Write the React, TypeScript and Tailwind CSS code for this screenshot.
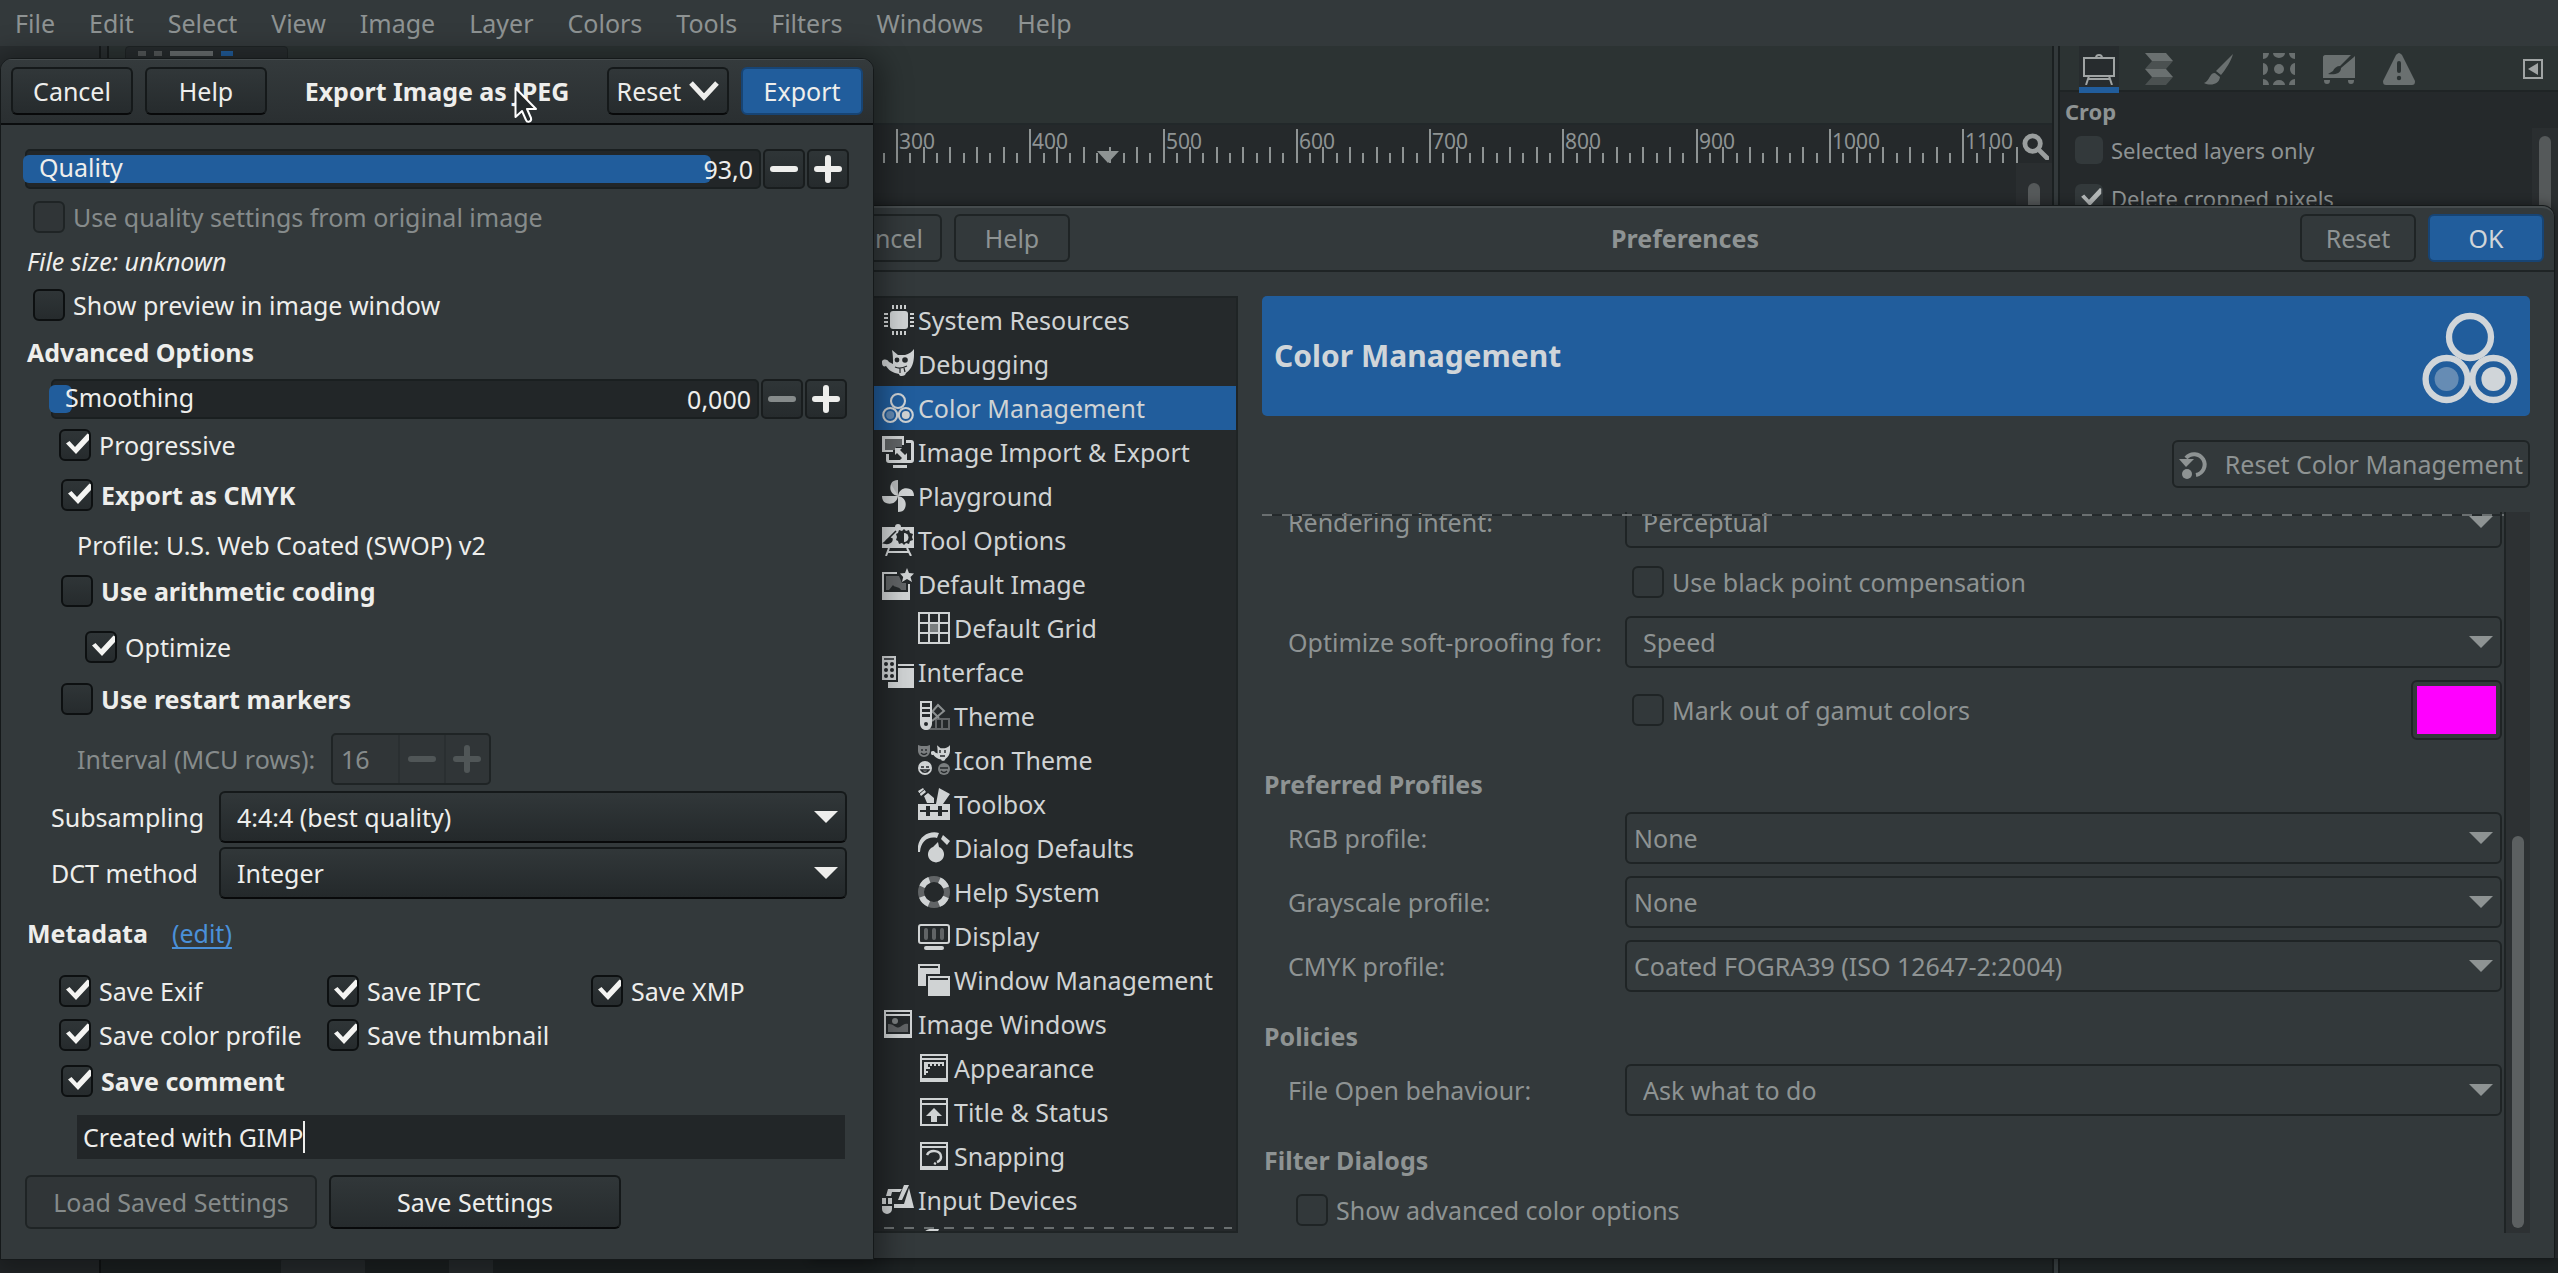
import { useState } from "react"
import type { ReactNode } from "react"
import clsx from "clsx"

const MENUS = ["File", "Edit", "Select", "View", "Image", "Layer", "Colors", "Tools", "Filters", "Windows", "Help"]

/* ---------- icons ---------- */

function Icon({ children, className = "size-8" }: { children: ReactNode; className?: string }) {
  return (
    <svg viewBox="0 0 32 32" fill="currentColor" className={clsx("shrink-0", className)} aria-hidden="true">
      {children}
    </svg>
  )
}

function CirclesIcon({ className }: { className?: string }) {
  return (
    <Icon className={className}>
      <g fill="none" stroke="currentColor" strokeWidth="2.1">
        <circle cx="16" cy="9" r="7" />
        <circle cx="8.2" cy="23" r="7" />
        <circle cx="23.8" cy="23" r="7" />
      </g>
      <circle cx="8.2" cy="23" r="4" opacity=".4" />
      <circle cx="23.8" cy="23" r="4" />
    </Icon>
  )
}

const WILBER = "M0 13c2-2 5-2 7 1l4 2c0-5 0-9-1-14l6 5h7c4-1 7-3 9-6 0 8 1 18-8 24l-1 2c-3 2-6 1-6-1l-4-1C8 23 6 21 4 18c-2 1-4 0-4-3Z"

const icons: Record<string, ReactNode> = {
  chip: (
    <Icon>
      <rect x="8" y="7" width="18" height="18" rx="3" />
      <path d="M10 1h2v4h-2zM14 1h2v4h-2zM18 1h2v4h-2zM22 1h2v4h-2zM10 27h2v4h-2zM14 27h2v4h-2zM18 27h2v4h-2zM22 27h2v4h-2zM2 9h4v2H2zM2 13h4v2H2zM2 17h4v2H2zM2 21h4v2H2zM28 9h4v2h-4zM28 13h4v2h-4zM28 17h4v2h-4zM28 21h4v2h-4z" />
    </Icon>
  ),
  wilber: (
    <Icon>
      <path d={WILBER} />
      <circle cx="15" cy="12" r="2.4" fill="#25292b" />
      <circle cx="23" cy="12" r="2.8" fill="#25292b" />
      <path d="M13 19c4 2 8 1 12-1M18 20v5M22 20l1 4" stroke="#25292b" strokeWidth="1.2" fill="none" />
    </Icon>
  ),
  circles: <CirclesIcon />,
  transfer: (
    <Icon>
      <path d="M0 0h22v9h-2V3H3v11h8v2H0z" />
      <path d="M3 3h17v8h-6v3H3z" opacity=".35" />
      <path d="M24 4h5a3 3 0 0 1 3 3v17a3 3 0 0 1-3 3H7a3 3 0 0 1-3-3v-6h3v6h22V7h-5zM11 29h14v3H11z" />
      <path d="M13 12h7l-2 2 5 5 2-2v7h-7l2-2-5-5-2 2z" />
    </Icon>
  ),
  pinwheel: (
    <Icon>
      <path d="M16 16C9 15 7 9 9 4c1-3 4-4 7-4zM16 16c1-7 7-9 12-7 3 1 4 4 4 7zM16 16c7 1 9 7 7 12-1 3-4 4-7 4zM16 16c-1 7-7 9-12 7-3-1-4-4-4-7z" />
      <path d="M16 16V0c-3 0-6 1-7 4M16 16h16M16 16v16M16 16H0" fill="#000" opacity=".12" />
    </Icon>
  ),
  easel: (
    <Icon>
      <path d="M13 3a3 3 0 0 1 6 0h13v21H0V3z" />
      <path d="m7 24-3 8M25 24l4 8M6 28h21" stroke="currentColor" strokeWidth="2" />
      <path d="m14 7-8 8M8 14c-3 0-3 3-6 5 4 1 8 0 8-4z" stroke="#25292b" strokeWidth="1.6" fill="#25292b" />
      <path d="m22 5 2 2 3-1 1 3 3 1-1 3 1 3-3 1-1 3-3-1-2 2-2-2-3 1-1-3-2-1 1-3-1-3 2-1 1-3 3 1z" fill="#25292b" />
      <path d="M22 9a4 4 0 0 1 0 9z" />
    </Icon>
  ),
  image: (
    <Icon>
      <path d="M0 4h15v2H2v18h24V16h2v16H0zM25 0l2 5 5 .5-3.500 3.500L30 14l-5-3-5 3 1.200-5L18 5.500l5-.5z" />
      <path d="M4 8h13l3 7h4v7h-5c-2-4-6-2-8-5l-4 5H4z" opacity=".35" />
    </Icon>
  ),
  grid: (
    <Icon>
      <path d="M11 11h10v10H11z" opacity=".5" />
      <path d="M1 1h30v30H1zM11 1v30M21 1v30M1 11h30M1 21h30" fill="none" stroke="currentColor" strokeWidth="2" />
    </Icon>
  ),
  interface: (
    <Icon>
      <path d="M0 0h14v24H0zM16 12h16v20H6v-6h10z" />
      <path d="M2 3h10M16 10h14" stroke="#25292b" strokeWidth="1.500" />
      <g fill="#25292b">
        <circle cx="4" cy="8" r="2" />
        <circle cx="10" cy="8" r="2" />
        <circle cx="4" cy="14" r="2" />
        <circle cx="10" cy="14" r="2" />
        <circle cx="4" cy="20" r="2" />
        <circle cx="10" cy="20" r="2" />
      </g>
      <path d="M16 8h16v2H16z" />
    </Icon>
  ),
  theme: (
    <Icon>
      <g fill="none" stroke="currentColor" strokeWidth="2">
        <path d="M8 29h23V19H18M18 19v10M24 19v10" opacity=".35" />
        <path d="m14 21 12-10-6-6-7 8M15 12l6 6" opacity=".6" />
        <path d="M3 2h10v22a5 5 0 0 1-10 0zM3 8h10M3 13h10M3 18h10" />
      </g>
      <path d="M3 19h10v6a5 5 0 0 1-10 0z" />
      <circle cx="8" cy="24" r="2" fill="#25292b" />
    </Icon>
  ),
  faces: (
    <Icon>
      <g opacity=".5">
        <path d="M0 1l3 1h6l3-1v6a6 6 0 0 1-12 0z" />
        <circle cx="26" cy="25" r="6" />
      </g>
      <circle cx="7" cy="24" r="7" />
      <g transform="translate(13 0) scale(.6)">
        <path d={WILBER} />
      </g>
      <g stroke="#25292b" strokeWidth="1.400" fill="none">
        <path d="M3 23h3M8 23h3M3 26c2 3 6 3 8 0zM22 24h8M23 27c2 2 4 2 6 0M4 5v2M8 5v2M3 9c2 2 4 2 6 0M22 6v3M27 6v3M22 12h5" />
      </g>
    </Icon>
  ),
  toolbox: (
    <Icon>
      <path d="M0 16h32v16H0zM0 3l5-3 3 4-5 4zM6 8l4-3 6 5v5H9zM21 0l11 6-7 10h-7z" />
      <path d="M2 23h28" stroke="#25292b" strokeWidth="2" />
      <path d="M8 18h4v10H8zM20 18h4v10h-4z" fill="#25292b" />
      <path d="M1 6l6-5M4 9l6-5" stroke="#25292b" strokeWidth="1" />
    </Icon>
  ),
  gauge: (
    <Icon>
      <path d="M0 20C-2 6 10-2 21 1l-2 5C10 4 3 9 2 20zM25 3l7 6-3 4-6-6zM20 10l1 5a8 8 0 1 1-6 0z" />
    </Icon>
  ),
  ring: (
    <Icon>
      <circle cx="16" cy="16" r="13" fill="none" stroke="currentColor" strokeWidth="6" opacity=".35" />
      <circle cx="16" cy="16" r="13" fill="none" stroke="currentColor" strokeWidth="6" strokeDasharray="10.210" strokeDashoffset="-5.100" />
    </Icon>
  ),
  display: (
    <Icon>
      <rect x="1" y="5" width="30" height="18" rx="2" fill="none" stroke="currentColor" strokeWidth="2" />
      <path d="M8 10v8M16 10v8M24 10v8" stroke="currentColor" strokeWidth="4" strokeLinecap="round" opacity=".35" />
      <rect x="6" y="26" width="20" height="4" rx="2" />
    </Icon>
  ),
  windows: (
    <Icon>
      <path d="M0 0h22v10H8v12H0zM10 12h22v20H10z" />
      <path d="M2 3h18M12 15h18" stroke="#25292b" strokeWidth="2" />
    </Icon>
  ),
  picture: (
    <Icon>
      <path d="M2 2h28v28H2zm2 2v2h24V4zm0 4v18h24V8z" fillRule="evenodd" />
      <path d="M6 16c5-1 8 5 12 3 3-2 5-4 8-3v8H6z" opacity=".35" />
      <circle cx="13" cy="13" r="3" opacity=".5" />
    </Icon>
  ),
  ruler: (
    <Icon>
      <path d="M2 2h28v28H2zm2 2v2h24V4zm0 4v18h24V8z" fillRule="evenodd" />
      <path d="M6 10h20v4h-2v-2h-2v2h-2v-2h-2v2h-2v-2h-2v2h-2v-2h-2v3h2v2H8v2h2v2H8v2H6z" />
    </Icon>
  ),
  titlebar: (
    <Icon>
      <path d="M2 2h28v28H2zm2 2v3h24V4zm0 5v19h24V9zM16 12l8 8h-5v6h-6v-6H8z" fillRule="evenodd" />
    </Icon>
  ),
  snap: (
    <Icon>
      <path d="M2 2h28v28H2zm2 2v2h24V4zm0 4v18h24V8z" fillRule="evenodd" />
      <path d="M9 15c3-6 14-5 14 2 0 2-1 4-4 5M16 23l2 1" fill="none" stroke="currentColor" strokeWidth="2.500" />
    </Icon>
  ),
  devices: (
    <Icon>
      <path d="M6 5h14l-2 3h-8l-1 4H4zM22 1h5l-7 15h-4zM27 4l5 20H12v-4h10z" />
      <path d="M0 14h4v6H0zM6 14h4v6H6zM0 22h10v3a5 5 0 0 1-10 0z" />
    </Icon>
  ),
}

/* ---------- shared controls ---------- */

type CheckProps = {
  label: string
  checked?: boolean
  disabled?: boolean
  bold?: boolean
  tone?: "dialog" | "muted" | "dock"
  className?: string
}

function Check({ label, checked = false, disabled = false, bold = false, tone = "dialog", className }: CheckProps) {
  const [on, setOn] = useState(checked)
  return (
    <label className={clsx("flex items-center gap-2", bold && "font-bold", disabled && "text-[#868b8b]", className)}>
      <span className="relative flex shrink-0">
        <input
          type="checkbox"
          checked={on}
          disabled={disabled}
          onChange={(e) => setOn(e.target.checked)}
          className={clsx(
            "appearance-none rounded-[6px]",
            tone === "dialog" && !disabled && "size-8 border-2 border-[#0d1011] bg-linear-to-b from-[#2f3537] to-[#262b2d]",
            tone === "dialog" && disabled && "size-8 border-2 border-[#1f2425] bg-[#303537]",
            tone === "muted" && "size-8 border-2 border-[#1f2425] bg-[#32383a]",
            tone === "dock" && "size-7 rounded-[4px] bg-[#33393b]",
          )}
        />
        {on && (
          <svg viewBox="0 0 32 32" className="pointer-events-none absolute inset-0" aria-hidden="true">
            <path d="M7 14.500 10.500 12l5.500 6L28.500 4.500l1.500 1V11L17 25z" fill={tone === "dock" ? "#b4b8b8" : "#f4f4f2"} />
          </svg>
        )}
      </span>
      {label}
    </label>
  )
}

function Arrow({ className }: { className?: string }) {
  return (
    <svg viewBox="0 0 24 12" className={clsx("pointer-events-none absolute w-6 h-3", className)} fill="currentColor" aria-hidden="true">
      <path d="M0 0h24L12 12z" />
    </svg>
  )
}

function Combo({ id, value, active = false, tight = false }: { id: string; value: string; active?: boolean; tight?: boolean }) {
  return (
    <div className="relative flex min-w-0 flex-1 items-center">
      <select
        id={id}
        className={clsx(
          "h-[52px] w-full appearance-none rounded-[6px] border-2",
          tight ? "pl-[7px]" : "pl-4",
          active
            ? "border-[#15191a] border-b-[#08090a] bg-linear-to-b from-[#313739] to-[#24292b] text-[#eeeeec]"
            : "border-[#1f2425] bg-[#33393b] text-[#8e9393]",
        )}
      >
        <option>{value}</option>
      </select>
      <Arrow className="right-[9px]" />
    </div>
  )
}

function Sign({ plus = false, className }: { plus?: boolean; className?: string }) {
  return (
    <svg viewBox="0 0 28 28" className={clsx("size-7", className)} stroke="currentColor" strokeWidth="6" strokeLinecap="round" aria-hidden="true">
      <path d={plus ? "M3 14h22M14 3v22" : "M3 14h22"} />
    </svg>
  )
}

const dialogButton =
  "flex h-12 items-center justify-center rounded-[6px] border-2 border-[#15191a] border-b-[#08090a] bg-linear-to-b from-[#313739] to-[#262b2d]"
const mutedButton = "flex h-12 items-center justify-center rounded-[6px] border-2 border-[#1f2425] bg-[#33393b]"

/* ---------- export dialog ---------- */

function Scale({ label, value, fill, atMin = false }: { label: string; value: string; fill: string; atMin?: boolean }) {
  const step = "flex h-10 w-[42px] items-center justify-center rounded-[5px] border-2 border-[#191d1e] bg-linear-to-b from-[#2f3537] to-[#262b2d]"
  return (
    <div className="flex gap-[2px]">
      <div className="relative flex h-10 flex-1 items-center justify-between rounded-[5px] border-2 border-[#1a1f20] bg-[#222628] pr-[6px] pl-3">
        <div className="absolute -left-1 top-1 h-7 rounded-[6px] bg-[#215d9c]" style={{ width: fill }} />
        <span className="relative pb-1">{label}</span>
        <span className="relative">{value}</span>
      </div>
      <button aria-label={`Decrease ${label}`} className={clsx(step, atMin && "text-[#868b8b]")}>
        <Sign />
      </button>
      <button aria-label={`Increase ${label}`} className={step}>
        <Sign plus />
      </button>
    </div>
  )
}

function ExportDialog() {
  return (
    <section className="absolute left-0 top-[58px] w-[874px] overflow-hidden rounded-t-xl border border-[#15191a] bg-[#33393b] text-[#eeeeec] shadow-[0_6px_28px_10px_rgba(0,0,0,0.35)]">
      <header className="flex h-[66px] items-center border-b-2 border-[#0b0d0e] border-t border-t-[#454b4d] bg-linear-to-b from-[#343a3c] to-[#2a2f31] px-[10px] pb-[2px]">
        <button className={clsx(dialogButton, "w-[122px]")}>Cancel</button>
        <button className={clsx(dialogButton, "ml-3 w-[122px]")}>Help</button>
        <h1 className="relative flex-1 text-center font-bold">
          Export Image as JPEG
          <svg viewBox="0 0 24 38" className="absolute top-[11px] right-[69px] h-[38px] w-6" aria-hidden="true">
            <path d="M1.500 2v29l6.500-6 4 9c1 3 6 2 5-2l-4-9h9z" fill="#24292b" stroke="#fff" strokeWidth="2" strokeLinejoin="round" />
          </svg>
        </h1>
        <button className={clsx(dialogButton, "w-[122px] gap-2")}>
          Reset
          <svg viewBox="0 0 30 20" className="h-5 w-[30px]" fill="none" stroke="currentColor" strokeWidth="5" aria-hidden="true">
            <path d="m2 2 13 14L28 2" />
          </svg>
        </button>
        <button className="ml-3 flex h-12 w-[122px] items-center justify-center rounded-[6px] border-2 border-[#174474] bg-[#215d9c]">Export</button>
      </header>

      <div className="flex flex-col px-6 pt-6 pb-[30px]">
        <Scale label="Quality" value="93,0" fill="94%" />
        <Check className="mt-[6px] ml-2 h-11" label="Use quality settings from original image" disabled />
        <p className="flex h-11 items-center pl-[2px] italic">File size: unknown</p>
        <Check className="ml-2 h-11" label="Show preview in image window" />
        <h2 className="mt-[3px] flex h-11 items-center pl-[2px] font-bold">Advanced Options</h2>
        <div className="mt-[5px] ml-[26px] mr-[2px]">
          <Scale label="Smoothing" value="0,000" fill="23px" atMin />
        </div>
        <Check className="mt-1 ml-[34px] h-11" label="Progressive" checked />
        <Check className="mt-[6px] ml-9 h-11" label="Export as CMYK" checked bold />
        <p className="mt-[6px] ml-[52px] flex h-11 items-center">Profile: U.S. Web Coated (SWOP) v2</p>
        <Check className="mt-[2px] ml-9 h-11" label="Use arithmetic coding" bold />
        <Check className="mt-3 ml-[60px] h-11" label="Optimize" checked />
        <Check className="mt-2 ml-9 h-11" label="Use restart markers" bold />

        <div className="mt-3 ml-[52px] flex h-[52px] items-center text-[#868b8b]">
          <label htmlFor="interval" className="w-[254px]">
            Interval (MCU rows):
          </label>
          <div className="flex h-[52px] w-40 items-stretch rounded-[5px] border-2 border-[#1f2425] bg-[#303537]">
            <input id="interval" disabled defaultValue="16" className="w-[65px] min-w-0 pl-2" />
            <button disabled aria-label="Decrease interval" className="flex flex-1 items-center justify-center border-l-2 border-[#2a2f31] text-[#505657]">
              <Sign />
            </button>
            <button disabled aria-label="Increase interval" className="flex flex-1 items-center justify-center border-l-2 border-[#2a2f31] text-[#505657]">
              <Sign plus />
            </button>
          </div>
        </div>

        <div className="mt-[6px] ml-[26px] mr-[2px] flex items-center">
          <label htmlFor="subsampling" className="w-[168px]">
            Subsampling
          </label>
          <Combo id="subsampling" value="4:4:4 (best quality)" active />
        </div>
        <div className="mt-1 ml-[26px] mr-[2px] flex items-center">
          <label htmlFor="dct" className="w-[168px]">
            DCT method
          </label>
          <Combo id="dct" value="Integer" active />
        </div>

        <div className="mt-3 flex h-11 items-center gap-6 pl-[2px]">
          <h2 className="font-bold">Metadata</h2>
          <a href="#metadata" className="text-[#4a90d9] underline underline-offset-4">
            (edit)
          </a>
        </div>
        <div className="mt-[14px] ml-[34px] grid grid-cols-[268px_264px_1fr]">
          <Check className="h-11" label="Save Exif" checked />
          <Check className="h-11" label="Save IPTC" checked />
          <Check className="h-11" label="Save XMP" checked />
          <Check className="h-11" label="Save color profile" checked />
          <Check className="h-11" label="Save thumbnail" checked />
        </div>
        <Check className="mt-[2px] ml-9 h-11" label="Save comment" checked bold />
        <div className="mt-3 ml-[52px] mr-1 flex h-11 items-center bg-[#222628] pl-[6px]">
          <input aria-label="Comment" defaultValue="Created with GIMP" className="field-sizing-content outline-none" />
          <span className="h-8 w-[2px] bg-[#eeeeec]" />
        </div>

        <div className="mt-4 flex gap-3">
          <button disabled className="flex h-[54px] w-[292px] items-center justify-center rounded-[6px] border-2 border-[#1f2425] bg-[#303537] text-[#868b8b]">
            Load Saved Settings
          </button>
          <button className={clsx(dialogButton, "h-[54px] w-[292px]")}>Save Settings</button>
        </div>
      </div>
    </section>
  )
}

/* ---------- preferences dialog ---------- */

const TREE = [
  { label: "System Resources", icon: "chip" },
  { label: "Debugging", icon: "wilber" },
  { label: "Color Management", icon: "circles", selected: true },
  { label: "Image Import & Export", icon: "transfer" },
  { label: "Playground", icon: "pinwheel" },
  { label: "Tool Options", icon: "easel" },
  { label: "Default Image", icon: "image" },
  { label: "Default Grid", icon: "grid", child: true },
  { label: "Interface", icon: "interface" },
  { label: "Theme", icon: "theme", child: true },
  { label: "Icon Theme", icon: "faces", child: true },
  { label: "Toolbox", icon: "toolbox", child: true },
  { label: "Dialog Defaults", icon: "gauge", child: true },
  { label: "Help System", icon: "ring", child: true },
  { label: "Display", icon: "display", child: true },
  { label: "Window Management", icon: "windows", child: true },
  { label: "Image Windows", icon: "picture" },
  { label: "Appearance", icon: "ruler", child: true },
  { label: "Title & Status", icon: "titlebar", child: true },
  { label: "Snapping", icon: "snap", child: true },
  { label: "Input Devices", icon: "devices" },
]

const dashes = "h-[2px] bg-[repeating-linear-gradient(90deg,#6a6f70_0_10px,#24292b_10px_20px)]"

function Field({ id, label, value, tight, className }: { id: string; label: string; value: string; tight?: boolean; className?: string }) {
  return (
    <div className={clsx("flex items-center pl-[26px]", className)}>
      <label htmlFor={id} className="w-[337px] shrink-0">
        {label}
      </label>
      <Combo id={id} value={value} tight={tight} />
    </div>
  )
}

function PreferencesDialog() {
  return (
    <section className="absolute left-[813px] right-[3px] top-[205px] rounded-t-xl border border-[#15191a] bg-[#33393b] text-[#8e9393] shadow-[0_0_10px_2px_rgba(0,0,0,0.3)]">
      <header className="flex h-[66px] items-center justify-between rounded-t-xl border-b-2 border-[#1f2425] border-t-2 border-t-[#454b4d] px-[10px] pb-[2px]">
        <div className="flex flex-1 gap-3 pl-[2px]">
          <button className={clsx(mutedButton, "w-[116px]")}>Cancel</button>
          <button className={clsx(mutedButton, "w-[116px]")}>Help</button>
        </div>
        <h1 className="font-bold">Preferences</h1>
        <div className="flex flex-1 justify-end gap-3">
          <button className={clsx(mutedButton, "w-[116px]")}>Reset</button>
          <button className="flex h-12 w-[116px] items-center justify-center rounded-[6px] border-2 border-[#174474] bg-[#215d9c] text-[#d0d5d9]">OK</button>
        </div>
      </header>

      <div className="flex gap-6 px-6 pt-6 pb-[25px]">
        <nav className="relative w-[400px] shrink-0 border-2 border-[#1f2425] bg-[#25292b] text-[#d0d3d4]">
          <ul>
            {TREE.map((row) => (
              <li key={row.label}>
                <a
                  href={`#${row.icon}`}
                  className={clsx("flex h-11 items-center gap-1", row.child ? "pl-[78px]" : "pl-[42px]", row.selected && "bg-[#215d9c]")}
                >
                  {icons[row.icon]}
                  {row.label}
                </a>
              </li>
            ))}
          </ul>
          <div className="h-[9px] overflow-hidden pt-[6px] pl-[78px]">{icons.gauge}</div>
          <div className={clsx(dashes, "absolute inset-x-1 bottom-[2px]")} />
        </nav>

        <div className="relative min-w-0 flex-1">
          <div className="absolute inset-0 flex flex-col">
            <div className="flex h-[120px] shrink-0 items-center justify-between rounded-[5px] bg-[#215d9c] pr-3 pl-3 text-[#d0d5d9]">
              <h2 className="text-[30px] font-bold">Color Management</h2>
              <CirclesIcon className="mt-1 size-24" />
            </div>
            <button className={clsx(mutedButton, "mt-6 shrink-0 gap-4 self-end px-[5px]")}>
              <svg viewBox="0 0 30 30" className="size-[30px]" fill="currentColor" aria-hidden="true">
                <path d="M7 9A10.500 10.500 0 1 1 17 26" fill="none" stroke="currentColor" strokeWidth="4" />
                <path d="M0 10h15L7 18z" />
                <circle cx="8" cy="25" r="5" />
              </svg>
              Reset Color Management
            </button>

            <div className="relative mt-6 flex min-h-0 flex-1">
              <div className="min-w-0 flex-1 overflow-hidden pr-[2px]">
                <Field className="-mt-4" id="intent" label="Rendering intent:" value="Perceptual" />
                <Check className="mt-3 ml-[370px] h-11" label="Use black point compensation" tone="muted" />
                <Field className="mt-3" id="proof" label="Optimize soft-proofing for:" value="Speed" />
                <div className="mt-3 ml-[370px] flex h-[60px] items-center justify-between">
                  <Check label="Mark out of gamut colors" tone="muted" />
                  <button aria-label="Gamut warning color" className="h-[60px] w-[91px] rounded-[6px] border-2 border-[#1f2425] p-1">
                    <span className="block size-full bg-[#ff00ff]" />
                  </button>
                </div>
                <h3 className="mt-[22px] flex h-11 items-center pl-[2px] font-bold">Preferred Profiles</h3>
                <Field className="mt-[6px]" id="rgb" label="RGB profile:" value="None" tight />
                <Field className="mt-3" id="gray" label="Grayscale profile:" value="None" tight />
                <Field className="mt-3" id="cmyk" label="CMYK profile:" value="Coated FOGRA39 (ISO 12647-2:2004)" tight />
                <h3 className="mt-[22px] flex h-11 items-center pl-[2px] font-bold">Policies</h3>
                <Field className="mt-[6px]" id="open" label="File Open behaviour:" value="Ask what to do" />
                <h3 className="mt-[22px] flex h-11 items-center pl-[2px] font-bold">Filter Dialogs</h3>
                <Check className="mt-[6px] ml-[34px] h-11" label="Show advanced color options" tone="muted" />
              </div>
              <div className={clsx(dashes, "absolute left-0 right-[26px] top-[2px]")} />
              <div className="flex w-[26px] shrink-0 flex-col items-center border-l-2 border-[#1f2425] bg-[#2d3133] pt-[324px] pb-[5px]">
                <div className="w-3 flex-1 rounded-full bg-[#5c6061]" />
              </div>
            </div>
          </div>
        </div>
      </div>
    </section>
  )
}

/* ---------- main window ---------- */

const RULER_ORIGIN = 387
const RULER_STEP = 13.33

function Ruler() {
  const ticks = Array.from({ length: 146 }, (_, i) => i - 28)
  return (
    <svg className="h-[38px] min-w-0 flex-1" aria-hidden="true">
      {ticks.map((n) => {
        const x = Math.round(RULER_ORIGIN + n * RULER_STEP)
        const len = n % 10 === 0 ? 34 : n % 2 === 0 ? 16 : 10
        return n < 115 && <rect key={n} x={x} y={38 - len} width="2" height={len} fill="#8e9393" />
      })}
      {[3, 4, 5, 6, 7, 8, 9, 10, 11].map((n) => (
        <text key={n} x={Math.round(RULER_ORIGIN + n * RULER_STEP * 10) + 3} y="24" fontSize="21" fill="#8e9393">
          {n * 100}
        </text>
      ))}
      <path d="M988 26h22l-11 12z" fill="#8e9393" />
    </svg>
  )
}

const dockTabs: { name: string; icon: ReactNode }[] = [
  {
    name: "Tool Options",
    icon: (
      <Icon className="size-8 text-[#a0a4a4]">
        <path d="M1 5h30v18H1zM13 5a3 3 0 0 1 6 0M5 26h22M6 23 3 32M26 23l3 9" fill="none" stroke="currentColor" strokeWidth="2" />
      </Icon>
    ),
  },
  {
    name: "Device Status",
    icon: (
      <Icon>
        <path d="M2 0h21l7 8H9zM2 16h21l7 8H9z" />
        <path d="M9 8h21l-7 8H2zM9 24h21l-7 8H2z" opacity=".5" />
      </Icon>
    ),
  },
  {
    name: "Brushes",
    icon: (
      <Icon>
        <path d="M30 1 13 18l5 4C23 16 28 8 30 1zM12 20c-6 0-5 8-11 10 6 3 15 2 16-6z" />
      </Icon>
    ),
  },
  {
    name: "Patterns",
    icon: (
      <Icon>
        <circle cx="16" cy="16" r="5" />
        <path d="M0 0h6a6 6 0 0 1-6 6zM10 0h12a6 5 0 0 1-12 0zM26 0h6v6a6 6 0 0 1-6-6zM0 10a5 6 0 0 1 0 12zM32 10a5 6 0 0 0 0 12zM0 26a6 6 0 0 1 6 6H0zM10 32a6 5 0 0 1 12 0zM26 32a6 6 0 0 1 6-6v6z" />
      </Icon>
    ),
  },
  {
    name: "Gradients",
    icon: (
      <Icon>
        <path d="M2 2h26L17 13c-3 0-6 2-7 5l-5 3c6 1 13 0 13-6L31 4l1-1v22H0V4c0-1 1-2 2-2zM1 27h6c0 3-1 4-3 4s-3-1-3-4zM25 27h6c0 3-1 4-3 4s-3-1-3-4z" />
      </Icon>
    ),
  },
  {
    name: "Error Console",
    icon: (
      <Icon>
        <path d="M16 0c1 0 2 1 3 2l13 26c0 3-1 4-3 4H3c-2 0-3-1-3-4L13 2c1-1 2-2 3-2z" />
        <path d="M16 10v8" stroke="#2c3333" strokeWidth="4" strokeLinecap="round" />
        <circle cx="16" cy="25" r="2.200" fill="#2c3333" />
      </Icon>
    ),
  },
]

function Dock() {
  return (
    <aside className="flex w-[498px] shrink-0 flex-col bg-[#25292b] text-[#8e9393]">
      <div className="flex h-[46px] shrink-0 items-start gap-5 border-b-2 border-[#1f2425] bg-[#2c3333] pr-[15px] pl-[19px]">
        {dockTabs.map((tab, i) => (
          <button
            key={tab.name}
            aria-label={tab.name}
            className={clsx(
              "flex h-[47px] w-10 shrink-0 items-center justify-center border-b-[6px] pt-[5px] text-[#6a7070]",
              i === 0 ? "border-[#215d9c] bg-[#272c2e]" : "border-transparent",
            )}
          >
            {tab.icon}
          </button>
        ))}
        <button aria-label="Configure this tab" className="mt-[13px] ml-auto text-[#a0a4a4]">
          <svg viewBox="0 0 20 20" className="size-5" aria-hidden="true">
            <rect x="1" y="1" width="18" height="18" fill="none" stroke="currentColor" strokeWidth="2" />
            <path d="M15 4v12L5 10z" fill="currentColor" />
          </svg>
        </button>
      </div>
      <div className="flex flex-1">
        <div className="flex-1 pl-[5px] text-[22px]">
          <h2 className="flex h-9 items-center pt-[2px] font-bold">Crop</h2>
          <Check className="ml-[10px] h-11" label="Selected layers only" tone="dock" />
          <Check className="mt-1 ml-[10px] h-11" label="Delete cropped pixels" tone="dock" checked />
        </div>
        <div className="mt-9 flex w-[26px] flex-col items-center bg-[#2a2e30] pt-2">
          <div className="w-3 flex-1 rounded-full bg-[#55595a]" />
        </div>
      </div>
    </aside>
  )
}

export default function App() {
  return (
    <div className="relative flex h-screen min-h-[1273px] flex-col overflow-hidden bg-[#1d2223] font-['Noto_Sans',sans-serif] text-[25px] leading-8 whitespace-nowrap">
      <nav className="flex h-[46px] shrink-0 items-center gap-[34px] bg-[#33393b] px-[15px] text-[#8e9393]">
        {MENUS.map((menu) => (
          <button key={menu}>{menu}</button>
        ))}
      </nav>

      <div className="flex min-h-0 flex-1">
        <div className="w-[101px] shrink-0 border-r-2 border-[#181c1d] bg-[#2a2f31]" />
        <div className="w-2 shrink-0 border-r-2 border-[#181c1d] bg-[#2a2f31]" />
        <main className="flex min-w-0 flex-1 flex-col bg-[#25292b]">
          <div className="flex h-[79px] shrink-0 items-start border-b-2 border-[#22282a] bg-[#2c3333] pl-4">
            <div className="h-12 w-[163px] rounded-t border border-[#1f2425] bg-[#272c2e] px-3 py-1">
              <div className="flex h-[5px] w-[95px] items-stretch gap-2">
                <span className="w-2 bg-[#55595a]" />
                <span className="w-2 bg-[#55595a]" />
                <span className="flex-1 bg-[#6a6f70]" />
                <span className="w-3 bg-[#215d9c]" />
              </div>
            </div>
          </div>
          <div className="flex items-start">
            <Ruler />
            <svg viewBox="0 0 28 28" className="mt-2 mr-[3px] size-[27px] text-[#9a9e9e]" fill="none" stroke="currentColor" strokeWidth="5" aria-hidden="true">
              <circle cx="11" cy="11" r="8" />
              <path d="m17 17 9 9" strokeLinecap="round" />
            </svg>
          </div>
          <div className="flex w-9 flex-1 flex-col items-center self-end bg-[#2a2e30] pt-5">
            <div className="w-3 flex-1 rounded-full bg-[#55595a]" />
          </div>
        </main>
        <div className="w-2 shrink-0 border-x-2 border-[#1b2021] bg-[#33393b]" />
        <Dock />
      </div>

      {/* strip of the window that shows under both dialogs */}
      <footer className="flex h-[15px] shrink-0 bg-[#1d2223]">
        <div className="w-[101px] border-r-2 border-[#111415] bg-[#25292b]" />
        <div className="ml-[180px] w-[84px] rounded-t bg-[#292e30]" />
        <div className="ml-[84px] w-11 bg-[#292e30]" />
        <div className="ml-auto mr-[498px] w-2 border-x-2 border-[#15191a] bg-[#33393b]" />
      </footer>

      <PreferencesDialog />
      <ExportDialog />
    </div>
  )
}
